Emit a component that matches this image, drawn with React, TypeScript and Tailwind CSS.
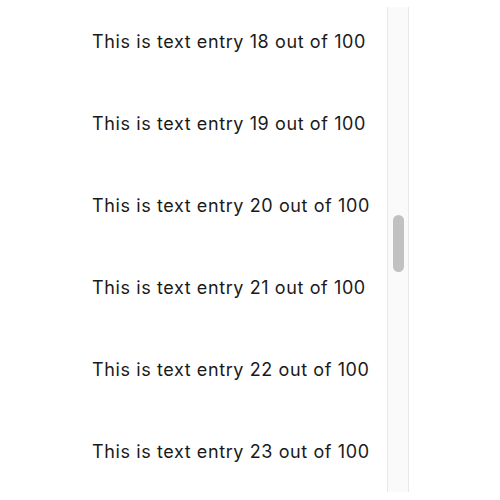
const entries = [18, 19, 20, 21, 22, 23]

export default function App() {
  return (
    <div className="flex h-[500px] w-[500px] overflow-hidden bg-white" style={{ fontFamily: 'Inter, "Noto Sans", sans-serif' }}>
      <div className="w-[387px] shrink-0">
        {entries.map((n) => (
          <div key={n} className="flex h-[82px] items-center pl-[92px] text-[18px] tracking-[0.6px] text-[#1a1a1a]">
            This is text entry {n} out of 100
          </div>
        ))}
      </div>
      <div className="mt-[7px] h-[485px] w-[22px] shrink-0 border-x border-[#e8e8e8] bg-[#fafafa] pt-[208px]">
        <div className="mx-auto h-[57px] w-[11px] rounded-full bg-[#c1c1c1]"></div>
      </div>
    </div>
  )
}
